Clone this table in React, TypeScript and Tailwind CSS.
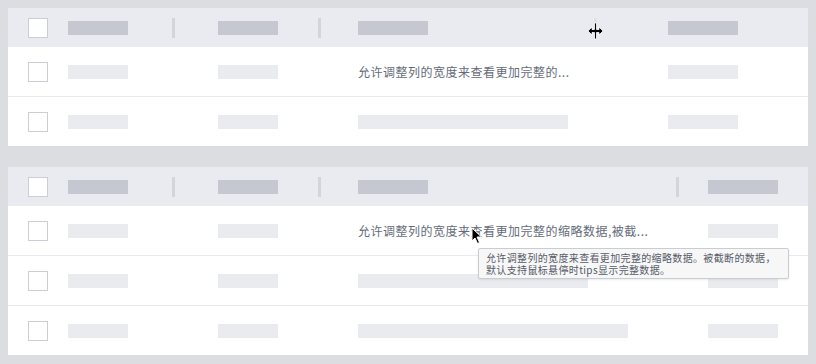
import React from 'react';

const font = { fontFamily: '"Noto Sans CJK SC", "Noto Sans", sans-serif' };

const Check = () => <div className="w-5 h-5 shrink-0 border border-[#cbced5] bg-white" />;
const HeadBar = ({ w }: { w: string }) => <div className={`${w} h-[14px] bg-[#c5c8d1] shrink-0`} />;
const BodyBar = ({ w }: { w: string }) => <div className={`${w} h-[14px] bg-[#e9ebef] shrink-0`} />;
const Divider = ({ faint }: { faint?: boolean }) => (
  <div className={`w-[3px] h-5 shrink-0 ${faint ? 'bg-[#dfe2e7]' : 'bg-[#d2d5db]'}`} />
);

type Row = { c: React.ReactNode };

const Table = ({
  cols,
  dividers,
  rows,
}: {
  cols: string[];
  dividers: React.ReactNode[];
  rows: Row[];
}) => (
  <div className="bg-white">
    {/* header */}
    <div className="flex h-[39px] items-center bg-[#e9ebf0]">
      <div className="w-[40px] pl-5 shrink-0"><Check /></div>
      {cols.map((cw, i) => (
        <div key={i} className={`${cw} shrink-0 flex items-center pl-5`}>
          <HeadBar w={i === 2 || i === 3 ? 'w-[70px]' : 'w-[60px]'} />
          {dividers[i]}
        </div>
      ))}
    </div>
    {rows.map((r, ri) => (
      <div key={ri} className={`flex h-[49px] items-center ${ri > 0 ? 'border-t border-[#e7ebf1] box-content' : ''}`}>
        <div className="w-[40px] pl-5 shrink-0"><Check /></div>
        <div className={`${cols[0]} shrink-0 pl-5`}><BodyBar w="w-[60px]" /></div>
        <div className={`${cols[1]} shrink-0 pl-5`}><BodyBar w="w-[60px]" /></div>
        <div className={`${cols[2]} shrink-0 pl-5`}>{r.c}</div>
        <div className={`${cols[3]} shrink-0 pl-5`}><BodyBar w="w-[70px]" /></div>
      </div>
    ))}
  </div>
);

const CellText = ({ children }: { children: React.ReactNode }) => (
  <div className="text-[12px] tracking-[0.5px] text-[#646b78] whitespace-nowrap leading-none">{children}</div>
);

export default function App() {
  return (
    <div className="relative w-[816px] h-[364px] bg-[#dcdde1] pt-2 px-2 overflow-hidden" style={font}>
      <Table
        cols={['w-[150px]', 'w-[140px]', 'w-[310px]', 'w-[160px]']}
        dividers={[
          <div key="a" className="ml-[44px]"><Divider /></div>,
          <div key="b" className="ml-[40px]"><Divider /></div>,
          <div key="c" className="ml-[166px]"><Divider faint /></div>,
          null,
        ]}
        rows={[
          { c: <CellText>允许调整列的宽度来查看更加完整的...</CellText> },
          { c: <BodyBar w="w-[210px]" /> },
        ]}
      />
      <div className="h-[21px]" />
      <Table
        cols={['w-[150px]', 'w-[140px]', 'w-[350px]', 'w-[120px]']}
        dividers={[
          <div key="a" className="ml-[44px]"><Divider /></div>,
          <div key="b" className="ml-[40px]"><Divider /></div>,
          <div key="c" className="ml-[248px]"><Divider /></div>,
          null,
        ]}
        rows={[
          { c: <CellText>允许调整列的宽度来查看更加完整的缩略数据,被截...</CellText> },
          { c: <BodyBar w="w-[230px]" /> },
          { c: <BodyBar w="w-[270px]" /> },
        ]}
      />

      {/* resize cursor */}
      <svg className="absolute left-[587px] top-[22px]" width="17" height="18" viewBox="0 0 17 18">
        <path
          d="M7.5 1h2v6.5h2.5V5l4 4-4 4v-2.5H9.5V17h-2v-6.5H5V13L1 9l4-4v2.5h2.5z"
          fill="#000"
          stroke="#fff"
          strokeWidth="0.8"
        />
      </svg>

      {/* tooltip */}
      <div className="absolute left-[478px] top-[248px] w-[311px] h-[31px] bg-[#f7f7f8] border border-[#c9ccd2] rounded-[2px] px-[7px] pt-[3px] text-[10px] leading-[12px] tracking-[0.35px] text-[#555b66] shadow-[0_1px_2px_rgba(0,0,0,0.08)]">
        <div className="whitespace-nowrap">允许调整列的宽度来查看更加完整的缩略数据。被截断的数据，</div>
        <div className="whitespace-nowrap">默认支持鼠标悬停时tips显示完整数据。</div>
      </div>

      {/* arrow cursor */}
      <svg className="absolute left-[471px] top-[227px]" width="12" height="18" viewBox="0 0 12 18">
        <path d="M1 1v13l3-3 2.5 5.5 2-1L6 10h4.5z" fill="#000" stroke="#fff" strokeWidth="1" />
      </svg>
    </div>
  );
}
